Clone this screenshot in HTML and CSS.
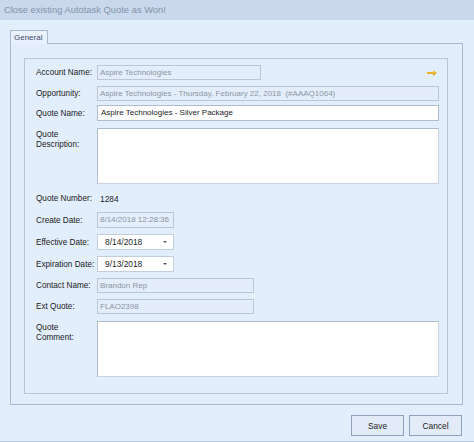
FILE: index.html
```html
<!DOCTYPE html>
<html>
<head>
<meta charset="utf-8">
<link rel="stylesheet" href="styles.css">
</head>
<body>
<div class="window">
  <div class="titlebar">Close existing Autotask Quote as Won!</div>
  <div class="body">
    <div class="tabs"><div class="tab">General</div></div>
    <div class="panel">
      <div class="group">
        <div class="row">
          <div class="label">Account Name:</div>
          <div class="field disabled w-account">Aspire Technologies</div>
          <svg class="arrow" width="10" height="6" viewBox="0 0 10 6"><defs><linearGradient id="g" x1="0" y1="0" x2="0" y2="1"><stop offset="0" stop-color="#f6d24a"/><stop offset="1" stop-color="#d89a10"/></linearGradient></defs><path d="M0 2 H6 V0 L10 3 L6 6 V4 H0 Z" fill="url(#g)"/></svg>
        </div>
        <div class="row">
          <div class="label">Opportunity:</div>
          <div class="field disabled grow">Aspire Technologies - Thursday, February 22, 2018 &nbsp;(#AAAQ1064)</div>
        </div>
        <div class="row pull">
          <div class="label">Quote Name:</div>
          <div class="field tall grow">Aspire Technologies - Silver Package</div>
        </div>
        <div class="row top push">
          <div class="label ml">Quote<br>Description:</div>
          <div class="area grow"></div>
        </div>
        <div class="row push">
          <div class="label">Quote Number:</div>
          <div class="value">1284</div>
        </div>
        <div class="row">
          <div class="label">Create Date:</div>
          <div class="field disabled date">8/14/2018 12:28:36</div>
        </div>
        <div class="row">
          <div class="label">Effective Date:</div>
          <div class="field dropdown date"><span>8/14/2018</span><span class="caret"></span></div>
        </div>
        <div class="row">
          <div class="label">Expiration Date:</div>
          <div class="field dropdown date"><span>9/13/2018</span><span class="caret"></span></div>
        </div>
        <div class="row">
          <div class="label">Contact Name:</div>
          <div class="field disabled w-contact">Brandon Rep</div>
        </div>
        <div class="row">
          <div class="label">Ext Quote:</div>
          <div class="field disabled w-contact">FLAO2398</div>
        </div>
        <div class="row top push">
          <div class="label ml">Quote<br>Comment:</div>
          <div class="area grow"></div>
        </div>
      </div>
    </div>
    <div class="buttons">
      <button class="btn">Save</button>
      <button class="btn">Cancel</button>
    </div>
  </div>
</div>
</body>
</html>
```

FILE: styles.css
```css
* { box-sizing: border-box; }
html, body { margin: 0; padding: 0; }
body {
  width: 474px;
  height: 442px;
  background: #e3eefc;
  font-family: "Liberation Sans", Arial, sans-serif;
  font-size: 8px;
  color: #1e1e1e;
  overflow: hidden;
}
.window {
  width: 474px;
  height: 442px;
  display: flex;
  flex-direction: column;
  border-bottom: 1px solid #b9c8db;
}
.titlebar {
  height: 20px;
  background: #c9d8ec;
  color: #8394a9;
  font-size: 9.4px;
  line-height: 20px;
  padding-left: 4px;
}
.body {
  flex: 1;
  padding: 10px 11px 0 10px;
  display: flex;
  flex-direction: column;
}
.tabs {
  display: flex;
  height: 14px;
}
.tab {
  width: 38px;
  height: 14px;
  border: 1px solid #a9b8cc;
  border-bottom: none;
  background: #e9f1fd;
  color: #3c4c66;
  line-height: 13px;
  padding-left: 3px;
  position: relative;
  z-index: 1;
}
.panel {
  height: 362px;
  border: 1px solid #a9b8cc;
  margin-top: -1px;
  padding: 14px 14px 0 13px;
}
.group {
  height: 336px;
  border: 1px solid #b7c6d9;
  padding: 6px 8px 0 11px;
  display: flex;
  flex-direction: column;
  gap: 6px;
}
.row {
  display: flex;
  align-items: center;
  min-height: 15px;
}
.row.top { align-items: flex-start; }
.row.pull { margin-top: -2px; }
.row.push { margin-top: 1px; }
.label {
  width: 61px;
  flex: none;
  color: #222;
  font-size: 8.2px;
  white-space: nowrap;
}
.label.ml { line-height: 10px; padding-top: 2px; }
.field {
  height: 15px;
  line-height: 13px;
  border: 1px solid #aebcce;
  background: #fff;
  padding-left: 3px;
  white-space: nowrap;
  overflow: hidden;
}
.field.tall { height: 16px; line-height: 14px; }
.field.disabled {
  background: #e4edfa;
  border-color: #bac7d7;
  color: #8b97a5;
  padding-left: 2px;
}
.grow { flex: 1; }
.w-account { width: 164px; }
.w-contact { width: 157px; }
.date { width: 77px; height: 16px; line-height: 14px; }
.dropdown {
  display: flex;
  justify-content: space-between;
  align-items: center;
  padding: 0 6px 0 7px;
  font-size: 8.4px;
  border-color: #c3cedc;
}
.caret {
  width: 0;
  height: 0;
  border-left: 2px solid transparent;
  border-right: 2px solid transparent;
  border-top: 2px solid #555;
}
.value { padding-left: 3px; font-size: 8.4px; }
.arrow { margin-left: auto; margin-right: 2px; }
.area {
  height: 56px;
  border: 1px solid #aebcce;
  border-right-color: #c9d3df;
  border-bottom-color: #c9d3df;
  background: #fff;
}
.buttons {
  display: flex;
  justify-content: flex-end;
  gap: 5px;
  margin-top: 10px;
  padding-right: 1px;
}
.btn {
  width: 53px;
  height: 21px;
  border: 1px solid #8ea3bb;
  background: #e2ebf7;
  font-family: "Liberation Sans", Arial, sans-serif;
  font-size: 8.4px;
  color: #222;
  padding: 0;
}
```
